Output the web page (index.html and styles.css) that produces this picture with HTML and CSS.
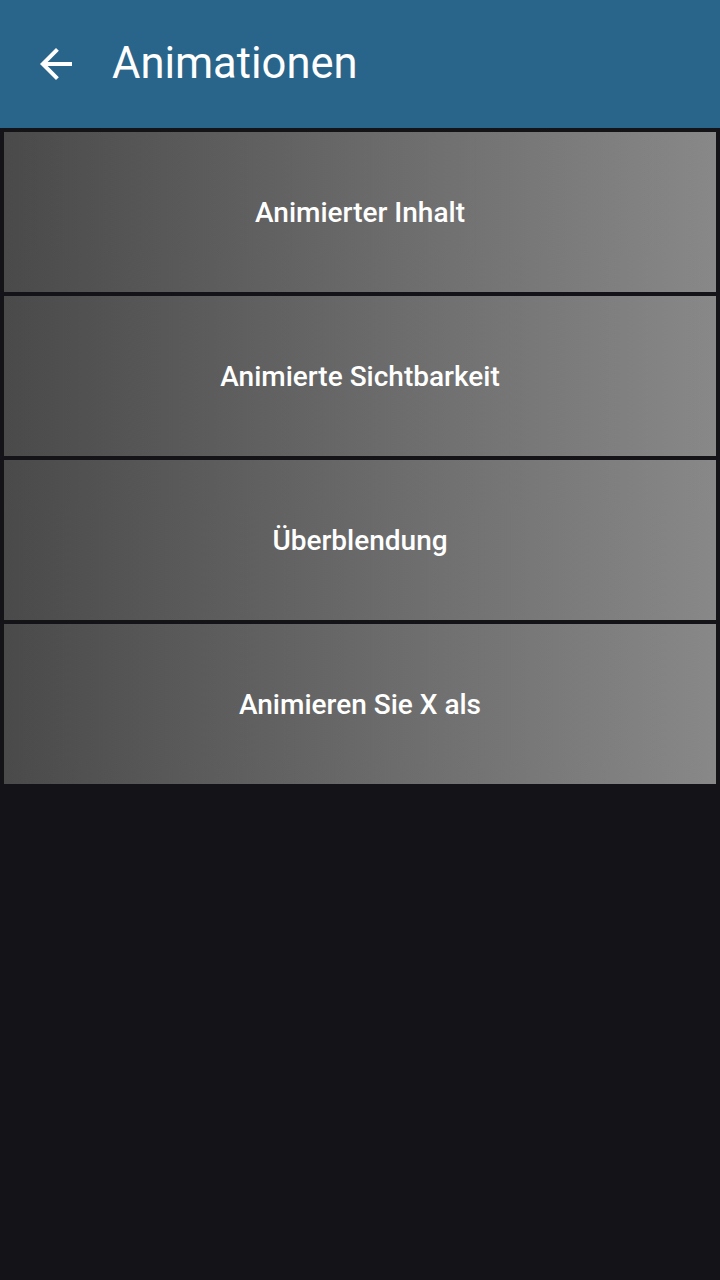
FILE: index.html
```html
<!DOCTYPE html>
<html lang="de">
<head>
<meta charset="utf-8">
<link rel="stylesheet" href="styles.css">
</head>
<body>
<header class="bar">
  <svg class="back" viewBox="0 0 24 24" width="48" height="48"><path d="M20 11H7.83l5.59-5.59L12 4l-8 8 8 8 1.41-1.41L7.83 13H20v-2z" fill="#fff"/></svg>
  <h1 class="title">Animationen</h1>
</header>
<main class="list">
  <div class="card">Animierter Inhalt</div>
  <div class="card">Animierte Sichtbarkeit</div>
  <div class="card">Überblendung</div>
  <div class="card">Animieren Sie X als</div>
</main>
</body>
</html>
```
FILE: styles.css
```css
html, body { margin: 0; padding: 0; }
body {
  width: 720px;
  height: 1280px;
  background: #141318;
  font-family: Roboto, "Noto Sans", sans-serif;
  overflow: hidden;
}
.bar {
  height: 128px;
  background: #29658a;
  display: flex;
  align-items: center;
  padding-left: 32px;
  box-sizing: border-box;
}
.back { display: block; flex: none; }
.title {
  margin: 0 0 0 32px;
  color: #fff;
  font-weight: 400;
  font-size: 43.5px;
  line-height: 1;
}
.list {
  display: flex;
  flex-direction: column;
  gap: 4px;
  padding: 4px 4px 0 4px;
}
.card {
  height: 160px;
  display: flex;
  align-items: center;
  justify-content: center;
  background: linear-gradient(to right, #4a4a4a, #888888);
  color: #fff;
  font-weight: 500;
  font-size: 28px;
}
```
